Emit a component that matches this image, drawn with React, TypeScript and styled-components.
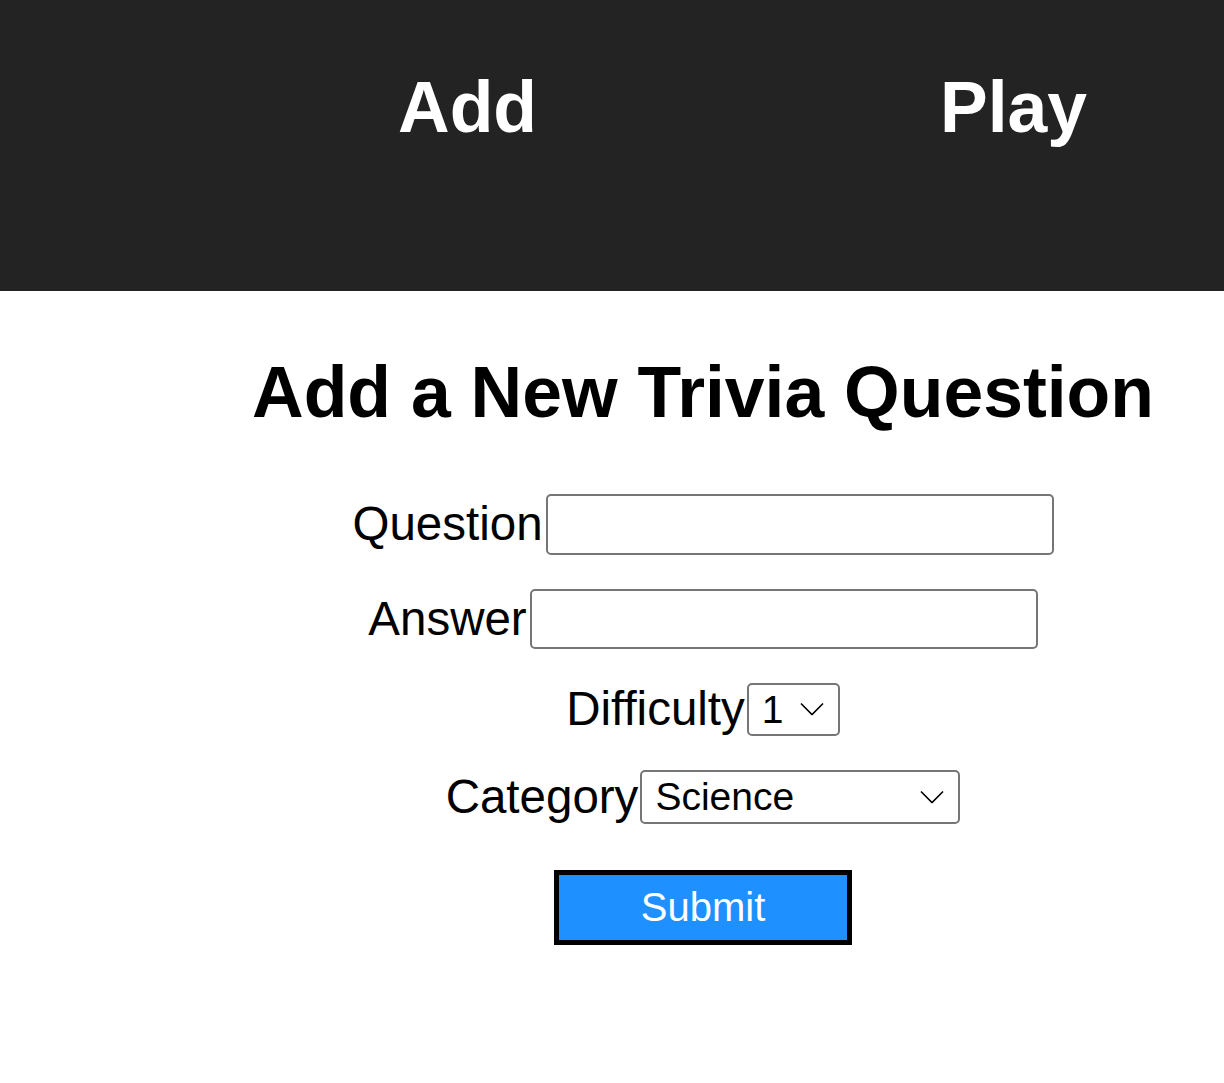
import React from "react";
import styled, { createGlobalStyle } from "styled-components";

const GlobalStyle = createGlobalStyle`
  html, body {
    margin: 0;
    padding: 0;
    background: #ffffff;
    font-family: "Liberation Sans", Arial, sans-serif;
  }
  * { box-sizing: border-box; }
`;

const Header = styled.header`
  height: 291px;
  background: #232323;
  padding-top: 72px;
`;

const Nav = styled.nav`
  display: flex;
  padding-left: 398px;
  gap: 403px;
`;

const NavLink = styled.a`
  color: #ffffff;
  font-weight: 700;
  font-size: 71.5px;
  line-height: 1;
  text-decoration: none;
  cursor: pointer;
`;

const Main = styled.main`
  display: flex;
  flex-direction: column;
  align-items: center;
  padding-left: 182px;
  padding-top: 66px;
`;

const Title = styled.h1`
  margin: 0;
  font-size: 71.5px;
  line-height: 1;
  font-weight: 700;
  color: #000;
`;

const Form = styled.form`
  display: flex;
  flex-direction: column;
  align-items: center;
  gap: 34px;
  margin-top: 65px;
`;

const Row = styled.div`
  display: flex;
  align-items: center;
`;

const Label = styled.label`
  font-size: 47.5px;
  line-height: 1;
  color: #000;
  white-space: nowrap;
`;

const TextInput = styled.input<{ $h: number }>`
  width: 508px;
  height: ${(p) => p.$h}px;
  border: 2px solid #767676;
  border-radius: 5px;
  background: #fff;
  font-family: inherit;
  font-size: 36px;
  padding: 0 10px;
  margin: 0 0 0 3px;
  outline: none;
`;

const SelectWrap = styled.div`
  position: relative;
  display: inline-flex;
  margin-left: 2px;
`;

const Select = styled.select<{ $w: number; $h: number }>`
  appearance: none;
  -webkit-appearance: none;
  width: ${(p) => p.$w}px;
  height: ${(p) => p.$h}px;
  border: 2px solid #767676;
  border-radius: 5px;
  background: #fff;
  color: #000;
  font-family: "Liberation Sans", Arial, sans-serif;
  font-size: 39px;
  padding: 0 0 0 13px;
  margin: 0;
  outline: none;
`;

const Chevron = styled.svg`
  position: absolute;
  right: 16px;
  top: 50%;
  transform: translateY(-50%);
  pointer-events: none;
`;

const SubmitButton = styled.button`
  margin-top: 12px;
  width: 298px;
  height: 75px;
  background: #1e90ff;
  border: 5px solid #000;
  border-radius: 0;
  color: #fff;
  font-family: "Liberation Sans", Arial, sans-serif;
  font-size: 40px;
  line-height: 1;
  padding: 0;
  cursor: pointer;
`;

const ChevronIcon = () => (
  <Chevron width="24" height="13" viewBox="0 0 24 13">
    <path d="M1 1 L12 12 L23 1" fill="none" stroke="#000" strokeWidth="1.6" />
  </Chevron>
);

export default function App() {
  return (
    <>
      <GlobalStyle />
      <Header>
        <Nav>
          <NavLink>Add</NavLink>
          <NavLink>Play</NavLink>
        </Nav>
      </Header>
      <Main>
        <Title>Add a New Trivia Question</Title>
        <Form onSubmit={(e) => e.preventDefault()}>
          <Row>
            <Label htmlFor="q">Question</Label>
            <TextInput id="q" $h={61} />
          </Row>
          <Row>
            <Label htmlFor="a">Answer</Label>
            <TextInput id="a" $h={60} />
          </Row>
          <Row>
            <Label htmlFor="d">Difficulty</Label>
            <SelectWrap>
              <Select id="d" $w={93} $h={53} defaultValue="1">
                <option value="1">1</option>
                <option value="2">2</option>
                <option value="3">3</option>
              </Select>
              <ChevronIcon />
            </SelectWrap>
          </Row>
          <Row>
            <Label htmlFor="c">Category</Label>
            <SelectWrap>
              <Select id="c" $w={320} $h={54} defaultValue="Science">
                <option>Science</option>
                <option>History</option>
                <option>Sports</option>
              </Select>
              <ChevronIcon />
            </SelectWrap>
          </Row>
          <SubmitButton type="submit">Submit</SubmitButton>
        </Form>
      </Main>
    </>
  );
}
